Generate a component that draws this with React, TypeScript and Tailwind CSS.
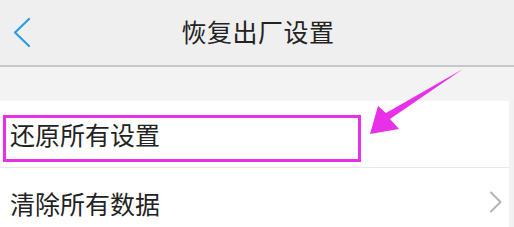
import React from 'react';

const font = { fontFamily: '"Noto Sans CJK SC", "Noto Sans", sans-serif' };

export default function App() {
    return (
        <div className="relative w-[514px] h-[227px] overflow-hidden bg-[#f1f1f1]" style={font}>
            {/* nav bar */}
            <div className="relative h-[67px] bg-[#efefef] border-b-2 border-[#c8c8c8] flex items-center justify-center">
                <button className="absolute left-[12px] top-[17px]">
                    <svg width="20" height="32" viewBox="0 0 20 32" fill="none">
                        <path d="M17 2 L3 15.5 L17 29" stroke="#279fe0" strokeWidth="2.2" strokeLinecap="round" strokeLinejoin="round" />
                    </svg>
                </button>
                <h1 className="text-[25px] leading-none text-[#222] tracking-[0.5px] -mt-[2px] ml-[2px]">恢复出厂设置</h1>
            </div>
            <div className="h-[34px] bg-[#f3f3f3]" />
            {/* list */}
            <div className="w-[509px] bg-white">
                <div className="h-[67px] flex items-center pl-[10px] border-b border-[#e8e8e8]">
                    <span className="text-[25px] leading-none text-[#222]">还原所有设置</span>
                </div>
                <div className="h-[60px] flex items-center justify-between pl-[10px] pr-[6px]">
                    <span className="text-[25px] leading-none text-[#222] mt-[10px]">清除所有数据</span>
                    <svg width="14" height="22" viewBox="0 0 14 22" fill="none" className="mt-[8px]">
                        <path d="M2 1.5 L11.5 11 L2 20.5" stroke="#b3b3b3" strokeWidth="2" strokeLinecap="round" strokeLinejoin="round" />
                    </svg>
                </div>
            </div>
            {/* annotation */}
            <div className="absolute left-[3px] top-[115px] w-[358px] h-[47px] border-[3px] border-[#e830e8]" />
            <svg className="absolute left-0 top-0" width="514" height="227" viewBox="0 0 514 227">
                <polygon points="463,69 390,119 399,129 370,134 378,106 386,113" fill="#e830e8" />
            </svg>
        </div>
    );
}
